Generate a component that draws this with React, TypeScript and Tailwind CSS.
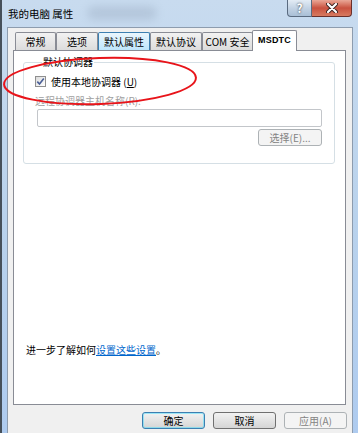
import React from 'react';

const tabs = [
    { label: '常规', w: 'w-[41px]' },
    { label: '选项', w: 'w-[42px]' },
    { label: '默认属性', w: 'w-[52px]', hover: true },
    { label: '默认协议', w: 'w-[52px]' },
    { label: 'COM 安全', w: 'w-[51px]' },
];

function Tab({ label, w, hover }: { label: string; w: string; hover?: boolean }) {
    return (
        <div
            className={`${w} h-[18px] flex items-center justify-center border border-b-0 rounded-t-[2px] ${
                hover
                    ? 'border-[#3c7fb1] bg-gradient-to-b from-[#eaf6fd] to-[#bee6fd]'
                    : 'border-[#898c95] bg-gradient-to-b from-[#f2f2f2] to-[#dcdcdc]'
            }`}
        >
            {label}
        </div>
    );
}

function Button({ children, primary, disabled }: { children: React.ReactNode; primary?: boolean; disabled?: boolean }) {
    return (
        <div
            className={`w-[63px] h-[17px] flex items-center justify-center rounded-[3px] border ${
                disabled
                    ? 'border-[#adb2b5] bg-[#f4f4f4] text-[#838383]'
                    : primary
                    ? 'border-[#3c7fb1] bg-gradient-to-b from-[#f2f2f2] to-[#d5d5d5] shadow-[inset_0_0_0_1px_#48dbfb80]'
                    : 'border-[#707070] bg-gradient-to-b from-[#f2f2f2] to-[#d5d5d5]'
            }`}
        >
            {children}
        </div>
    );
}

export default function App() {
    return (
        <div className="relative w-[358px] h-[433px] overflow-hidden bg-[#46505a] pl-[2px] text-[10px] leading-[14px] text-black font-['Noto_Sans_CJK_SC',sans-serif]">
            <div className="h-full flex flex-col bg-gradient-to-b from-[#c8dbef] via-[#b9d2ec] to-[#aecbef] pl-[5px] pr-[5px]">
                {/* Title bar */}
                <div className="relative h-[27px] flex items-start">
                    <div className="absolute left-[80px] top-[6px] w-[70px] h-[14px] rounded-full bg-[#8a9bb0] opacity-30 blur-[4px]" />
                    <span className="relative mt-[7px] ml-[1px] text-[10.5px]">我的电脑 属性</span>
                    <div className="relative ml-auto mr-[1px] flex">
                        <div className="w-[25px] h-[17px] flex items-center justify-center rounded-bl-[4px] border border-t-0 border-[#5a6b80] bg-gradient-to-b from-[#e3ecf5] via-[#c3d3e4] to-[#a9bfd6] text-white font-bold text-[12px] [text-shadow:0_0_2px_#222]">
                            ?
                        </div>
                        <div className="w-[40px] h-[17px] flex items-center justify-center rounded-br-[4px] border border-t-0 border-l-0 border-[#6a2f2a] bg-gradient-to-b from-[#e9a797] via-[#c9513f] to-[#d77a60]">
                            <svg width="12" height="10" viewBox="0 0 12 10">
                                <path d="M2 1 L10 9 M10 1 L2 9" stroke="#3a2220" strokeWidth="4" strokeLinecap="round" />
                                <path d="M2 1 L10 9 M10 1 L2 9" stroke="#ffffff" strokeWidth="2.2" strokeLinecap="round" />
                            </svg>
                        </div>
                    </div>
                </div>

                {/* Client area */}
                <div className="flex-1 flex flex-col bg-[#f0f0f0] border border-b-0 border-[#8d9cae] pl-[5px] pr-[6px] pt-[3px]">
                    {/* Tabs */}
                    <div className="relative z-10 h-[19px] flex items-end pl-[2px]">
                        {tabs.map((t) => (
                            <Tab key={t.label} {...t} />
                        ))}
                        <div className="-ml-[1px] -mb-[1px] w-[45px] h-[21px] flex items-start justify-center pt-[2px] border border-b-0 border-[#898c95] rounded-t-[2px] bg-white font-['Liberation_Sans',sans-serif] text-[9px] font-bold tracking-[0.2px]">
                            MSDTC
                        </div>
                    </div>

                    {/* Panel */}
                    <div className="h-[355px] flex flex-col border border-[#898c95] bg-white">
                        <fieldset className="mt-[4px] ml-[9px] mr-[10px] h-[109px] border border-[#d5dfe5] rounded-[3px] pl-[11px] pr-[12px]">
                            <legend className="ml-[7px] px-[1px]">默认协调器</legend>
                            <div className="mt-[7px] h-[11px] flex items-center">
                                <div className="w-[11px] h-[11px] border border-[#8f8f8f] bg-gradient-to-br from-[#dcdcdc] to-[#ffffff] flex items-center justify-center">
                                    <svg width="9" height="9" viewBox="0 0 9 9">
                                        <path d="M1.3 4.6 L3.5 7 L7.8 1.4" stroke="#4a5f97" strokeWidth="1.6" fill="none" />
                                    </svg>
                                </div>
                                <span className="ml-[5px]">使用本地协调器 (<span className="underline">U</span>)</span>
                            </div>
                            <div className="mt-[7px] h-[14px] text-[#a0a0a0]">远程协调器主机名称(R):</div>
                            <div className="mt-[1px] ml-[2px] h-[18px] border border-[#c3c6ca] rounded-[2px] bg-white" />
                            <div className="mt-[2px] flex justify-end">
                                <div className="w-[64px] h-[17px] flex items-center justify-center border border-[#adb2b5] rounded-[3px] bg-[#f4f4f4] text-[#838383]">
                                    选择(E)...
                                </div>
                            </div>
                        </fieldset>
                        <div className="flex-1" />
                        <div className="ml-[12px] mb-[47px]">
                            进一步了解如何<span className="text-[#0066cc] underline">设置这些设置</span>。
                        </div>
                    </div>

                    {/* Buttons */}
                    <div className="mt-[7px] -mr-[1px] flex justify-end gap-[8px]">
                        <Button primary>确定</Button>
                        <Button>取消</Button>
                        <Button disabled>应用(A)</Button>
                    </div>
                </div>
            </div>

            {/* Red annotation */}
            <svg className="absolute left-0 top-0 pointer-events-none" width="358" height="433" viewBox="0 0 358 433">
                <ellipse cx="100" cy="81" rx="96" ry="23" transform="rotate(-2 100 81)" fill="none" stroke="#e8141a" strokeWidth="2" />
            </svg>
        </div>
    );
}
